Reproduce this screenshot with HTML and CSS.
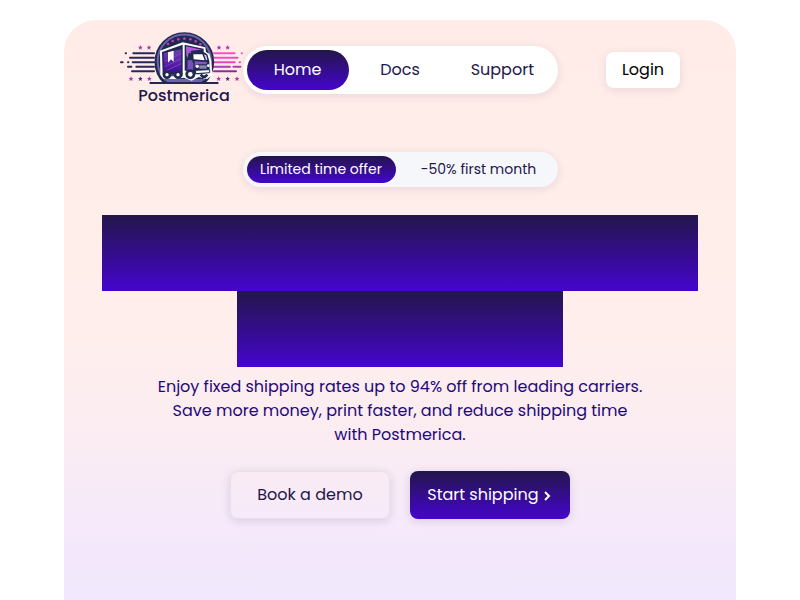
FILE: index.html
```html
<!DOCTYPE html>
<html lang="en">
<head>
  <meta charset="UTF-8" />
  <meta name="viewport" content="width=device-width, initial-scale=1" />
  <title>Postmerica</title>
  <link rel="stylesheet" href="styles.css">
</head>
<body>
  <div class="page">
    <header class="header">
      <a class="logo" href="#">
        <svg class="logo-img" viewBox="30 24 384 156" aria-hidden="true">
          <defs>
            <linearGradient id="box" x1="0" y1="0" x2="0" y2="1">
              <stop offset="0" stop-color="#7040b0" />
              <stop offset="1" stop-color="#4308a0" />
            </linearGradient>
            <linearGradient id="trail" gradientUnits="userSpaceOnUse" x1="0" y1="86" x2="0" y2="144">
              <stop offset="0" stop-color="#ff4fc8" />
              <stop offset=".5" stop-color="#e846bd" />
              <stop offset="1" stop-color="#7d2e94" />
            </linearGradient>
            <path id="star" d="M0-7 2-2 7-2 3 2 5 7 0 4-5 7-3 2-7-2-2-2z" />
          </defs>

          <!-- speed lines -->
          <g stroke="#29265a" stroke-width="6" stroke-linecap="round" fill="none">
            <path d="M70 88H132M60 101H132M68 115H132M79 128H132M66 142H132" />
            <path d="M47 88H48M33 115H38M54 115H55M54 128H64" />
          </g>
          <g stroke="url(#trail)" stroke-width="6" stroke-linecap="round" fill="none">
            <path d="M312 88H374M312 101.500H383M312 115H374M312 128H360M312 142H378" />
            <path d="M395 88H396M389 115H390M370 128.500H391" />
          </g>
          <g fill="#b02fa6">
            <use href="#star" x="91" y="70" />
            <use href="#star" x="117" y="70" />
            <use href="#star" x="327" y="70" />
            <use href="#star" x="353" y="70" />
            <use href="#star" x="63" y="164" />
            <use href="#star" x="118" y="164" />
            <use href="#star" x="326" y="164" />
            <use href="#star" x="381" y="164" />
          </g>
          <g fill="#53258c">
            <use href="#star" x="91" y="164" />
            <use href="#star" x="353" y="164" />
          </g>

          <!-- badge -->
          <path d="M162 176A87 87 0 1 1 284 176z" fill="#202a4e" stroke="#202a4e" stroke-width="5" />
          <path d="M166 168A80 80 0 1 1 280 168" fill="none" stroke="#6f61ac" stroke-width="6" />
          <path d="M161 165H285L274 175H172z" fill="#6f61ac" />
          <path d="M121 177H323" stroke="#202a4e" stroke-width="6" stroke-linecap="round" />
          <g fill="#c43bc5">
            <circle cx="174" cy="60" r="4" />
            <circle cx="188" cy="51" r="4" />
            <circle cx="205" cy="46" r="4" />
            <circle cx="223" cy="44" r="4" />
            <circle cx="241" cy="46" r="4" />
            <circle cx="257" cy="52" r="4" />
            <circle cx="271" cy="61" r="4" />
          </g>

          <!-- truck -->
          <path d="M150 80 218 55 286 70 288 84 298 89 304 112 307 154 291 165 266 159 245 170 221 161 196 165 160 164 151 153z" fill="#fff" />
          <path d="M156 84 218 62 218 150 158 154z" fill="#202a4e" />
          <path d="M161 88 214 76V142L162 148z" fill="url(#box)" />
          <path d="M165 112 213 88M164 128 213 104M166 141 213 119" stroke="#8757c0" stroke-width="2" />
          <path d="M174 85 191 80V113L183 106 174 116z" fill="#fff" />
          <path d="M224 62 281 74V84H242L232 92V140H224z" fill="#202a4e" />
          <path d="M228 67 275 77 244 80 229 96z" fill="#b554df" />
          <path d="M235 89 244 84H281L292 91 298 111 299 142 278 151H230V108z" fill="#202a4e" />
          <path d="M250 91H277L284 109 251 106z" fill="#fff" />
          <path d="M282 91 289 94 292 108H288z" fill="#d7c9ef" />
          <path d="M233 108 246 109 250 119 249 145 232 147z" fill="#7750bd" />
          <path d="M254 112 292 114 289 121H260L254 133z" fill="#8655c5" />
          <path d="M268 124H290V134H268z" fill="#8c85b7" />
          <circle cx="262" cy="127" r="5" fill="#fff" />
          <circle cx="295" cy="125" r="4" fill="#fff" />
          <path d="M257 139 299 137V146L257 149z" fill="#fff" stroke="#202a4e" stroke-width="3" />
          <path d="M161 152 218 148V157H161z" fill="#4b4384" />
          <g fill="#fff" stroke="#202a4e" stroke-width="8">
            <circle cx="171" cy="152" r="9" />
            <circle cx="204" cy="152" r="9" />
            <circle cx="241" cy="151" r="11" />
            <path d="M272 152Q282 165 292 152" />
          </g>
        </svg>
        <span class="logo-text">Postmerica</span>
      </a>

      <nav class="nav">
        <a class="nav-link active" href="#">Home</a>
        <a class="nav-link" href="#">Docs</a>
        <a class="nav-link" href="#">Support</a>
      </nav>

      <button class="login" type="button">Login</button>
    </header>

    <main class="hero">
      <div class="offer">
        <span class="offer-tag">Limited time offer</span>
        <span class="offer-text">-50% first month</span>
      </div>

      <div class="headline">
        <div class="headline-line"></div>
        <div class="headline-line short"></div>
      </div>

      <p class="intro">
        Enjoy fixed shipping rates up to 94% off from leading carriers.<br>
        Save more money, print faster, and reduce shipping time<br>
        with Postmerica.
      </p>

      <div class="actions">
        <button class="btn btn-demo" type="button">Book a demo</button>
        <button class="btn btn-start" type="button">
          Start shipping
          <svg class="chevron" viewBox="0 0 10 12" aria-hidden="true">
            <path d="M2 2 6 6 2 10" />
          </svg>
        </button>
      </div>
    </main>
  </div>
</body>
</html>
```
FILE: styles.css
```css
* {
  box-sizing: border-box;
}
body {
  margin: 0;
  padding: 20px 8% 0;
  background: #fff;
  color: #23164a;
  font-family: Poppins, Inter, sans-serif;
  font-size: 16px;
  line-height: 24px;
}
a {
  color: inherit;
  text-decoration: none;
}
button {
  font: inherit;
  border: none;
  cursor: pointer;
}
.page {
  min-height: calc(100vh - 20px);
  border-radius: 32px 32px 0 0;
  background: linear-gradient(180deg, #ffece8 0%, #ffeeeb 52%, #faecf3 74%, #f5e9fb 88%, #f0e7fc 100%);
}

/* header */
.header {
  display: grid;
  grid-template-columns: 1fr auto 1fr;
  align-items: center;
  padding: 12px 56px 0;
}
.logo {
  display: flex;
  flex-direction: column;
  align-items: center;
  width: 128px;
  margin-right: -6px;
}
.logo-img {
  display: block;
  width: 128px;
  height: 52px;
}
.logo-text {
  font-weight: 500;
}
.nav {
  position: relative;
  display: flex;
  width: 315px;
  padding: 4px;
  border-radius: 24px;
  background: #fff;
  box-shadow: 0 2px 10px rgba(35, 22, 74, 0.1);
}
.nav-link {
  flex: 1;
  padding: 8px 0;
  border-radius: 20px;
  text-align: center;
}
.nav-link.active,
.offer-tag,
.headline-line,
.btn-start {
  background: linear-gradient(180deg, #23164a 0%, #4405cb 98%);
  color: #fff;
}
.login {
  justify-self: end;
  width: 74px;
  height: 36px;
  padding: 0;
  border-radius: 8px;
  background: #fff;
  color: #000;
  box-shadow: 0 2px 10px rgba(35, 22, 74, 0.1);
}

/* hero */
.hero {
  display: flex;
  flex-direction: column;
  align-items: center;
  padding: 44px 32px;
}
.offer {
  display: flex;
  width: 315px;
  padding: 4px;
  border-radius: 20px;
  background: #f6f7fb;
  font-size: 14px;
  line-height: 27px;
  box-shadow: 0 2px 10px rgba(35, 22, 74, 0.1);
}
.offer-tag {
  width: 149px;
  border-radius: 16px;
  text-align: center;
}
.offer-text {
  flex: 1;
  padding-left: 8px;
  text-align: center;
}
.headline {
  width: 100%;
  margin-top: 28px;
}
.headline-line {
  width: 98%;
  height: 76px;
  margin: 0 auto;
}
.headline-line.short {
  width: 326px;
}
.intro {
  margin: 8px 0 24px;
  color: #23087a;
  text-align: center;
}
.actions {
  display: flex;
  gap: 20px;
}
.btn {
  width: 160px;
  height: 48px;
  padding: 0;
  border-radius: 8px;
  box-shadow: 0 2px 10px rgba(35, 22, 74, 0.14);
}
.btn-demo {
  border: 1px solid #e2e3ea;
  background: linear-gradient(180deg, #faebf3, #f6eafa);
  color: #23164a;
}
.chevron {
  width: 10px;
  height: 12px;
  vertical-align: -2px;
  fill: none;
  stroke: #fff;
  stroke-width: 2;
}
```
